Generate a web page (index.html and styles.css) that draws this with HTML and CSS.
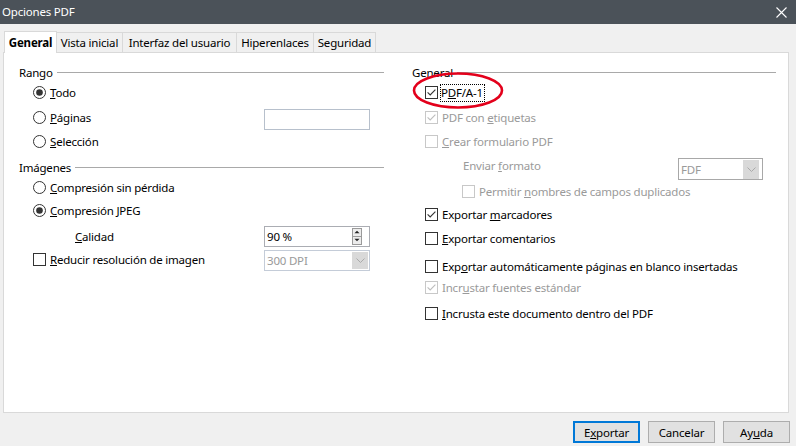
FILE: index.html
```html
<!DOCTYPE html>
<html lang="es">
<head>
<meta charset="utf-8">
<title>Opciones PDF</title>
<link rel="stylesheet" href="styles.css">
</head>
<body>
<div class="titlebar">
  <span class="title">Opciones PDF</span>
  <svg class="close" viewBox="0 0 11 11"><path d="M0.5 0.5L10.5 10.5M10.5 0.5L0.5 10.5" stroke="#fff" stroke-width="1.1" fill="none"/></svg>
</div>

<div class="tabs">
  <div class="tab active w1">General</div>
  <div class="tab w2">Vista inicial</div>
  <div class="tab w3">Interfaz del usuario</div>
  <div class="tab w4">Hiperenlaces</div>
  <div class="tab w5">Seguridad</div>
</div>

<div class="panel">
  <div class="col left">
    <div class="group-head"><span>Rango</span><span class="rule"></span></div>
    <div class="row h25 ind">
      <svg class="radio" viewBox="0 0 13 13"><circle cx="6.5" cy="6.5" r="6" fill="#fff" stroke="#333"/><circle cx="6.5" cy="6.5" r="3.3" fill="#333"/></svg>
      <span><u>T</u>odo</span>
    </div>
    <div class="row h24 ind">
      <svg class="radio" viewBox="0 0 13 13"><circle cx="6.5" cy="6.5" r="6" fill="#fff" stroke="#333"/></svg>
      <span><u>P</u>áginas</span>
      <span class="field pages"></span>
    </div>
    <div class="row h24 ind">
      <svg class="radio" viewBox="0 0 13 13"><circle cx="6.5" cy="6.5" r="6" fill="#fff" stroke="#333"/></svg>
      <span><u>S</u>elección</span>
    </div>

    <div class="group-head mt6"><span>Imágenes</span><span class="rule"></span></div>
    <div class="row h25 ind">
      <svg class="radio" viewBox="0 0 13 13"><circle cx="6.5" cy="6.5" r="6" fill="#fff" stroke="#333"/></svg>
      <span><u>C</u>ompresión sin pérdida</span>
    </div>
    <div class="row h20 ind">
      <svg class="radio" viewBox="0 0 13 13"><circle cx="6.5" cy="6.5" r="6" fill="#fff" stroke="#333"/><circle cx="6.5" cy="6.5" r="3.3" fill="#333"/></svg>
      <span><u>C</u>ompresión JPEG</span>
    </div>
    <div class="row h24 mt4 ind-calidad">
      <span><u>C</u>alidad</span>
      <span class="field spin">
        <span class="val">90 %</span>
        <span class="spinbtns">
          <span class="sb"><svg viewBox="0 0 7 4"><path d="M0.5 3.5L3.5 0.5L6.5 3.5Z" fill="#222"/></svg></span>
          <span class="sb"><svg viewBox="0 0 7 4"><path d="M0.5 0.5L3.5 3.5L6.5 0.5Z" fill="#222"/></svg></span>
        </span>
      </span>
    </div>
    <div class="row h23 ind">
      <svg class="chk" viewBox="0 0 13 13"><rect x="0.5" y="0.5" width="12" height="12" fill="#fff" stroke="#333"/></svg>
      <span><u>R</u>educir resolución de imagen</span>
      <span class="field combo dis dpi"><span class="val">300 DPI</span><span class="arrow"><svg viewBox="0 0 9 5"><path d="M0.5 0.5L4.5 4.5L8.5 0.5" stroke="#aaa" fill="none"/></svg></span></span>
    </div>
  </div>

  <div class="col right">
    <div class="group-head"><span>General</span><span class="rule"></span></div>
    <div class="row h25 indr">
      <svg class="chk" viewBox="0 0 13 13"><rect x="0.5" y="0.5" width="12" height="12" fill="#fff" stroke="#333"/><path d="M2.6 6.4L5.2 9L10.4 3.6" stroke="#333" stroke-width="1.1" fill="none"/></svg>
      <span class="focus">P<u>D</u>F/A-1</span>
    </div>
    <div class="row h25 indr dis">
      <svg class="chk" viewBox="0 0 13 13"><rect x="0.5" y="0.5" width="12" height="12" fill="#fff" stroke="#c8c8c8"/><path d="M2.6 6.4L5.2 9L10.4 3.6" stroke="#bdbdbd" stroke-width="1.1" fill="none"/></svg>
      <span>PDF con <u>e</u>tiquetas</span>
    </div>
    <div class="row h22 indr dis">
      <svg class="chk" viewBox="0 0 13 13"><rect x="0.5" y="0.5" width="12" height="12" fill="#fff" stroke="#c8c8c8"/></svg>
      <span><u>C</u>rear formulario PDF</span>
    </div>
    <div class="row h24 mt5 indsub dis">
      <span class="lbl-top">Enviar <u>f</u>ormato</span>
      <span class="field combo fdf"><span class="val">FDF</span><span class="arrow"><svg viewBox="0 0 9 5"><path d="M0.5 0.5L4.5 4.5L8.5 0.5" stroke="#aaa" fill="none"/></svg></span></span>
    </div>
    <div class="row h16 mt2 indsub2 dis">
      <svg class="chk" viewBox="0 0 13 13"><rect x="0.5" y="0.5" width="12" height="12" fill="#fff" stroke="#c8c8c8"/></svg>
      <span>Permitir <u>n</u>ombres de campos duplicados</span>
    </div>
    <div class="row h24 mt3 indr">
      <svg class="chk" viewBox="0 0 13 13"><rect x="0.5" y="0.5" width="12" height="12" fill="#fff" stroke="#333"/><path d="M2.6 6.4L5.2 9L10.4 3.6" stroke="#333" stroke-width="1.1" fill="none"/></svg>
      <span>Exportar <u>m</u>arcadores</span>
    </div>
    <div class="row h24 indr">
      <svg class="chk" viewBox="0 0 13 13"><rect x="0.5" y="0.5" width="12" height="12" fill="#fff" stroke="#333"/></svg>
      <span><u>E</u>xportar comentarios</span>
    </div>
    <div class="row h22 mt5 indr">
      <svg class="chk" viewBox="0 0 13 13"><rect x="0.5" y="0.5" width="12" height="12" fill="#fff" stroke="#333"/></svg>
      <span>Exp<u>o</u>rtar automáticamente páginas en blanco insertadas</span>
    </div>
    <div class="row h21 indr dis">
      <svg class="chk" viewBox="0 0 13 13"><rect x="0.5" y="0.5" width="12" height="12" fill="#fff" stroke="#c8c8c8"/><path d="M2.6 6.4L5.2 9L10.4 3.6" stroke="#bdbdbd" stroke-width="1.1" fill="none"/></svg>
      <span>Incr<u>u</u>star fuentes estándar</span>
    </div>
    <div class="row h25 mt3 indr">
      <svg class="chk" viewBox="0 0 13 13"><rect x="0.5" y="0.5" width="12" height="12" fill="#fff" stroke="#333"/></svg>
      <span><u>I</u>ncrusta este documento dentro del PDF</span>
    </div>
  </div>
</div>

<svg class="mark" viewBox="0 0 92 39"><ellipse cx="46" cy="19.5" rx="44" ry="17" fill="none" stroke="#e3001b" stroke-width="2.6"/></svg>

<div class="buttons">
  <button class="btn default">E<u>x</u>portar</button>
  <button class="btn">Cancelar</button>
  <button class="btn">Ay<u>u</u>da</button>
</div>
</body>
</html>
```

FILE: styles.css
```css
* { box-sizing: border-box; margin: 0; padding: 0; }
html, body { width: 796px; height: 446px; overflow: hidden; }
body {
  background: #f0f0f0;
  font-family: "Noto Sans", "Open Sans", sans-serif;
  font-size: 11.5px;
  letter-spacing: -0.2px;
  color: #000;
  position: relative;
}
u { text-decoration: underline; text-underline-offset: 1px; }

.titlebar {
  height: 24px;
  background: #4b5259;
  display: flex;
  align-items: center;
  justify-content: space-between;
  padding: 0 9px 0 2px;
  color: #fff;
}
.title { font-size: 11.5px; line-height: 24px; }
.close { width: 11px; height: 11px; display: block; }

.tabs {
  display: flex;
  align-items: flex-end;
  height: 21px;
  margin: 7px 0 0 4px;
  position: relative;
  z-index: 1;
}
.tab {
  height: 20px;
  border: 1px solid #d9d9d9;
  border-bottom: none;
  background: #f0f0f0;
  display: flex;
  align-items: center;
  justify-content: center;
  margin-left: -1px;
  line-height: 14px;
}
.tab.active {
  height: 22px;
  margin-left: 0;
  margin-bottom: -1px;
  background: #fff;
  font-weight: bold;
  position: relative;
  z-index: 2;
}
.w1 { width: 53px; }
.w2 { width: 67px; }
.w3 { width: 115px; }
.w4 { width: 78px; }
.w5 { width: 63px; }

.panel {
  margin-left: 3px;
  width: 786px;
  height: 361px;
  border: 1px solid #d9d9d9;
  background: #fff;
  display: flex;
  gap: 28px;
  padding: 11px 12px 0 15px;
}
.col { display: flex; flex-direction: column; }
.left { width: 365px; }
.right { width: 364px; }

.group-head {
  display: flex;
  align-items: center;
  height: 16px;
  gap: 4px;
}
.rule { flex: 1; height: 1px; background: #a9a9a9; }

.row { display: flex; align-items: center; }
.h16 { height: 16px; }
.h20 { height: 20px; }
.h21 { height: 21px; }
.h22 { height: 22px; }
.h23 { height: 23px; }
.h24 { height: 24px; }
.h25 { height: 25px; }
.mt2 { margin-top: 2px; }
.mt3 { margin-top: 3px; }
.mt4 { margin-top: 4px; }
.mt5 { margin-top: 5px; }
.mt6 { margin-top: 6px; }

.ind { padding-left: 14px; }
.indr { padding-left: 13px; }
.indsub { padding-left: 51px; }
.indsub2 { padding-left: 50px; }
.ind-calidad { padding-left: 56px; }

.radio, .chk { width: 13px; height: 13px; flex: none; margin-right: 4px; display: block; }

.dis { color: #9a9a9a; }

.focus {
  outline: 1px dotted #000;
  outline-offset: 0;
  padding: 0 1px 1px 0;
  margin-left: -1px;
}

.field {
  margin-left: auto;
  margin-right: 14px;
  width: 106px;
  height: 21px;
  border: 1px solid #abadb3;
  background: #fff;
  display: flex;
  align-items: center;
  color: #000;
}
.pages { align-self: flex-start; margin-top: 4px; border-color: #b7c0cc; }
.val { flex: 1; padding-left: 2px; }

.spinbtns {
  width: 10px;
  height: 17px;
  margin-right: 7px;
  display: flex;
  flex-direction: column;
  border: 1px solid #9a9a9a;
  background: #ececec;
}
.sb { flex: 1; display: flex; align-items: center; justify-content: center; }
.sb + .sb { border-top: 1px solid #9a9a9a; }
.sb svg { width: 6px; height: 4px; display: block; }

.combo.dis, .combo { color: #9a9a9a; }
.dpi { border-color: #c4ccd8; margin-top: 2px; }
.combo .arrow {
  width: 16px;
  height: 17px;
  margin-right: 1px;
  background: #d9d9d9;
  display: flex;
  align-items: center;
  justify-content: center;
}
.combo .arrow svg { width: 9px; height: 5px; display: block; }

.fdf {
  width: 85px;
  height: 22px;
  margin-right: 13px;
  border-color: #a8a8a8;
  background: #fff;
}
.fdf .arrow { margin-right: 3px; height: 19px; }
.lbl-top { align-self: flex-start; line-height: 16px; margin-top: 1px; }

.mark {
  position: absolute;
  left: 412px;
  top: 71px;
  width: 92px;
  height: 39px;
}

.buttons {
  display: flex;
  justify-content: flex-end;
  gap: 8px;
  margin-top: 8px;
  padding-right: 6px;
}
.btn {
  width: 67px;
  height: 22px;
  background: #e1e1e1;
  border: 1px solid #adadad;
  font-family: "Noto Sans", "Open Sans", sans-serif;
  font-size: 11.5px;
  letter-spacing: -0.2px;
  color: #000;
}
.btn.default { border: 2px solid #0078d7; }
```
